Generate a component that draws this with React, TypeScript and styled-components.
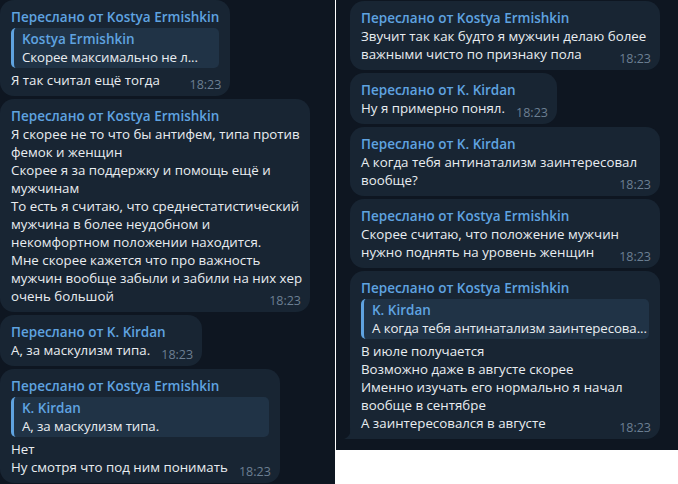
import React from 'react'
import styled, { createGlobalStyle } from 'styled-components'

const GlobalStyle = createGlobalStyle`
  html, body {
    margin: 0;
    padding: 0;
    background: #ffffff;
  }
  body {
    font-family: 'Open Sans', 'Noto Sans', sans-serif;
    -webkit-font-smoothing: antialiased;
  }
`

const Page = styled.div`
  display: flex;
  align-items: flex-start;
  gap: 1px;
  width: 678px;
  height: 484px;
  overflow: hidden;
`

const Panel = styled.div<{ $width: number; $height: number; $shift: number }>`
  display: flex;
  flex-direction: column;
  align-items: flex-start;
  gap: 3px;
  box-sizing: border-box;
  width: ${({ $width }) => $width}px;
  height: ${({ $height }) => $height}px;
  padding: ${({ $shift }) => $shift}px 14px 0;
  background: #0e1621;
  overflow: hidden;
`

const Bubble = styled.div<{ $wide?: boolean; $tail?: boolean }>`
  position: relative;
  flex-shrink: 0;
  box-sizing: border-box;
  width: ${({ $wide }) => ($wide ? '310px' : 'fit-content')};
  padding: 8px 11px 7px;
  background: #182533;
  border-radius: 14px;
  border-bottom-left-radius: ${({ $tail }) => ($tail ? '0' : '14px')};
  color: #e9edf1;
  font-size: 13.3px;
  line-height: 18px;
  white-space: nowrap;
`

const Tail = styled.svg`
  position: absolute;
  left: -6px;
  bottom: 0;
`

const Forwarded = styled.div`
  color: #5fa3e0;
  font-size: 13.5px;
  font-weight: 600;
`

const Quote = styled.div`
  margin: 2px 0 3px;
  padding: 2px 3px 2px 8px;
  background: #203346;
  border-left: 3px solid #5fa3e0;
  border-radius: 5px;
  overflow: hidden;
`

const QuoteName = styled.div`
  color: #5fa3e0;
  font-size: 13.5px;
  font-weight: 600;
`

const QuoteText = styled.div`
  color: #e9edf1;
  letter-spacing: -0.1px;
`

const Body = styled.div``

const TimeSpace = styled.span`
  display: inline-block;
  width: 41px;
`

const Time = styled.span`
  position: absolute;
  right: 9px;
  bottom: 4px;
  color: #6c7f92;
  font-size: 12.5px;
  line-height: 14px;
`

type Msg = {
  from: string
  quote?: { name: string; text: string }
  lines: string[]
  wide?: boolean
  tail?: boolean
}

const left: Msg[] = [
  {
    from: 'Kostya Ermishkin',
    quote: { name: 'Kostya Ermishkin', text: 'Скорее максимально не л...' },
    lines: ['Я так считал ещё тогда'],
  },
  {
    from: 'Kostya Ermishkin',
    wide: true,
    lines: [
      'Я скорее не то что бы антифем, типа против',
      'фемок и женщин',
      'Скорее я за поддержку и помощь ещё и',
      'мужчинам',
      'То есть я считаю, что среднестатистический',
      'мужчина в более неудобном и',
      'некомфортном положении находится.',
      'Мне скорее кажется что про важность',
      'мужчин вообще забыли и забили на них хер',
      'очень большой',
    ],
  },
  {
    from: 'K. Kirdan',
    lines: ['А, за маскулизм типа.'],
  },
  {
    from: 'Kostya Ermishkin',
    quote: { name: 'K. Kirdan', text: 'А, за маскулизм типа.' },
    lines: ['Нет', 'Ну смотря что под ним понимать'],
  },
]

const right: Msg[] = [
  {
    from: 'Kostya Ermishkin',
    wide: true,
    lines: ['Звучит так как будто я мужчин делаю более', 'важными чисто по признаку пола'],
  },
  {
    from: 'K. Kirdan',
    lines: ['Ну я примерно понял.'],
  },
  {
    from: 'K. Kirdan',
    wide: true,
    lines: ['А когда тебя антинатализм заинтересовал', 'вообще?'],
  },
  {
    from: 'Kostya Ermishkin',
    wide: true,
    lines: ['Скорее считаю, что положение мужчин', 'нужно поднять на уровень женщин'],
  },
  {
    from: 'Kostya Ermishkin',
    wide: true,
    tail: true,
    quote: { name: 'K. Kirdan', text: 'А когда тебя антинатализм заинтересова...' },
    lines: [
      'В июле получается',
      'Возможно даже в августе скорее',
      'Именно изучать его нормально я начал',
      'вообще в сентябре',
      'А заинтересовался в августе',
    ],
  },
]

const Message = ({ msg }: { msg: Msg }) => (
  <Bubble $wide={msg.wide} $tail={msg.tail}>
    {msg.tail && (
      <Tail width="7" height="11" viewBox="0 0 7 11">
        <path d="M7 0 C7 5 5 9 0 11 L7 11 Z" fill="#182533" />
      </Tail>
    )}
    <Forwarded>Переслано от {msg.from}</Forwarded>
    {msg.quote && (
      <Quote>
        <QuoteName>{msg.quote.name}</QuoteName>
        <QuoteText>{msg.quote.text}</QuoteText>
      </Quote>
    )}
    <Body>
      {msg.lines.map((line, i) => (
        <React.Fragment key={i}>
          {line}
          {i < msg.lines.length - 1 ? <br /> : <TimeSpace />}
        </React.Fragment>
      ))}
    </Body>
    <Time>18:23</Time>
  </Bubble>
)

const App = () => (
  <>
    <GlobalStyle />
    <Page>
      <Panel $width={335} $height={484} $shift={-2}>
        {left.map((m, i) => (
          <Message key={i} msg={m} />
        ))}
      </Panel>
      <Panel $width={342} $height={450} $shift={1}>
        {right.map((m, i) => (
          <Message key={i} msg={m} />
        ))}
      </Panel>
    </Page>
  </>
)

export default App
